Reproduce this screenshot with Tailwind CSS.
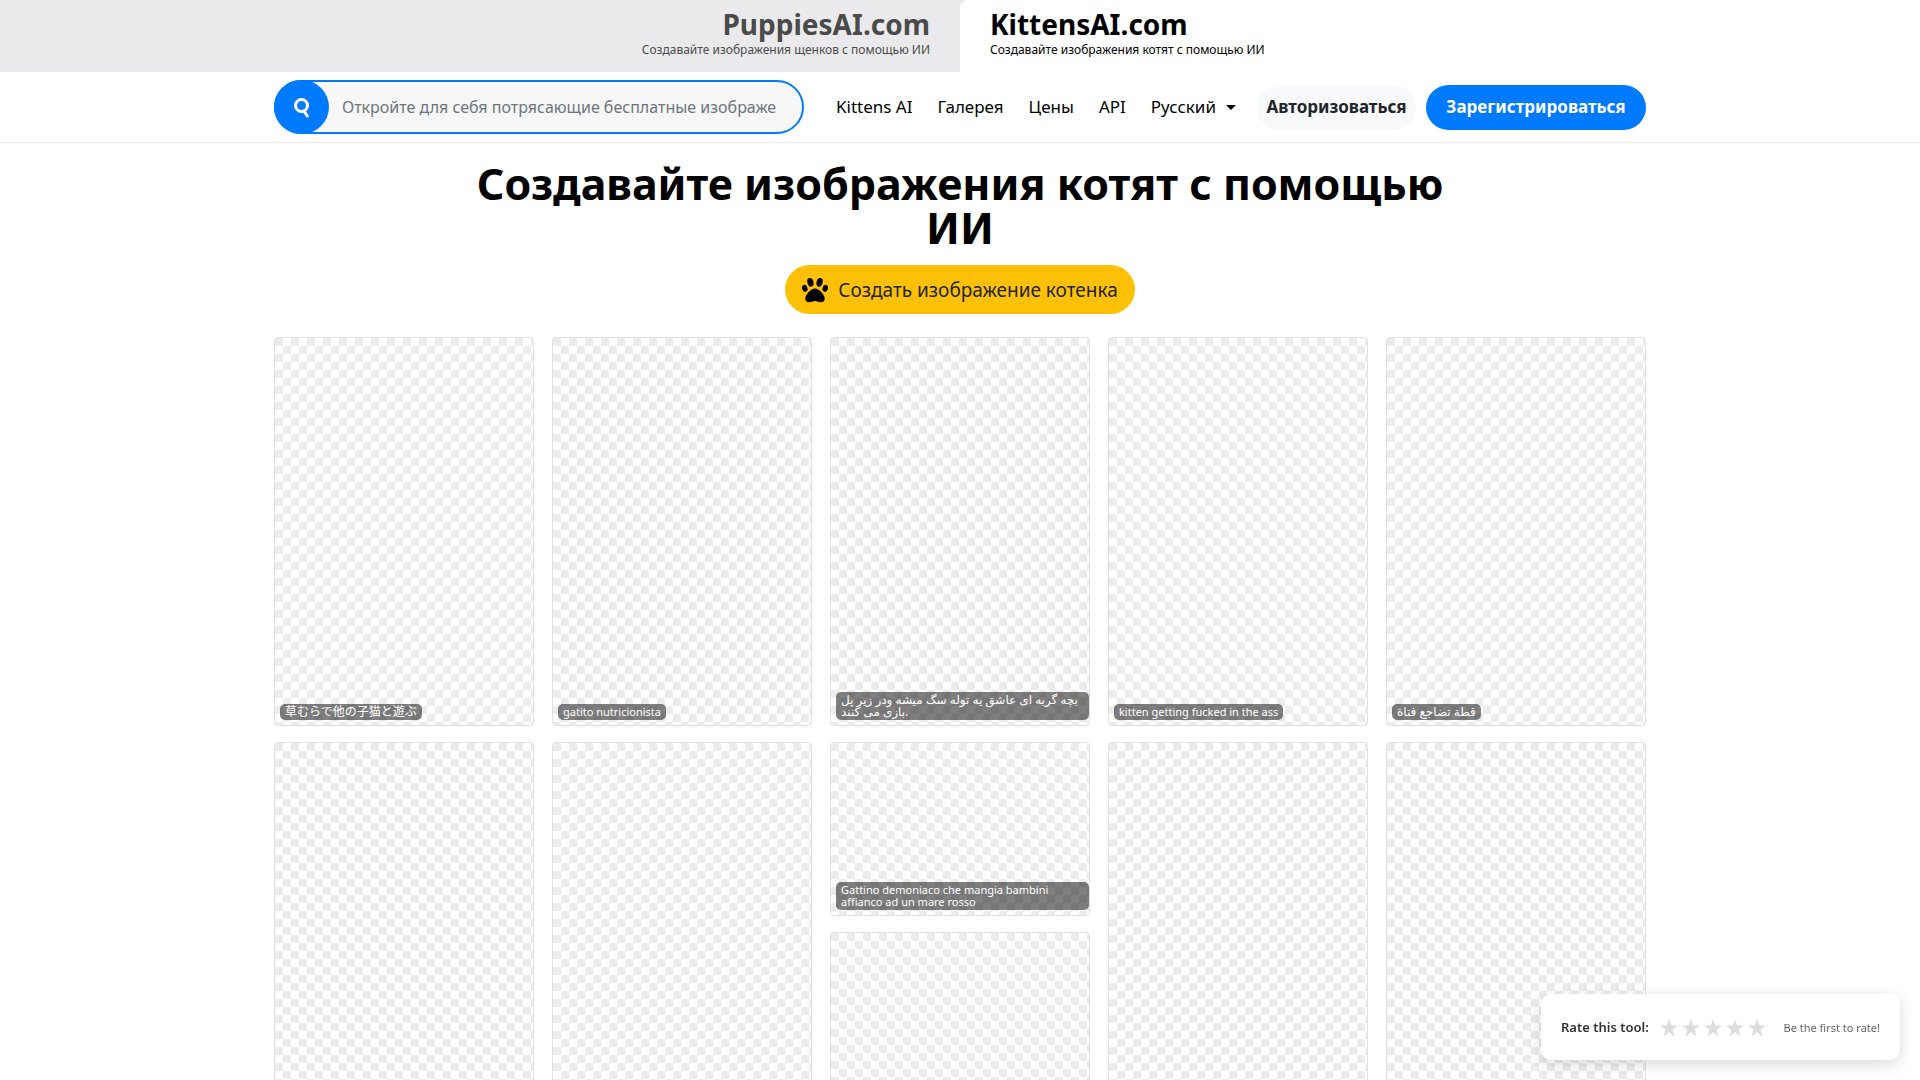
<!DOCTYPE html>
<html lang="ru">
<head>
    <meta charset="UTF-8">
    <meta name="viewport" content="width=device-width, initial-scale=1.0">
    <title>KittensAI.com</title>
    <script src="https://cdn.jsdelivr.net/npm/@tailwindcss/browser@4"></script>
</head>
<body class="bg-white text-black font-['Noto_Sans','Noto_Sans_CJK_JP','DejaVu_Sans',sans-serif]">
    <!-- site tabs -->
    <div class="grid grid-cols-2 h-[72px] bg-[#eaeaec]">
        <a href="#" class="block pt-2 pr-[30px] text-right text-[#4a4a4a]">
            <div class="text-[28px] leading-8 font-bold">PuppiesAI.com</div>
            <div class="text-[12px] leading-5">Создавайте изображения щенков с помощью ИИ</div>
        </a>
        <a href="#" class="block pt-2 pl-[30px] bg-white rounded-tl-lg">
            <div class="text-[28px] leading-8 font-bold">KittensAI.com</div>
            <div class="text-[12px] leading-5">Создавайте изображения котят с помощью ИИ</div>
        </a>
    </div>

    <header class="border-b border-[#ececec]">
        <div class="max-w-[1372px] mx-auto h-[70px] flex items-center">
            <form class="flex w-[530px] h-[54px] shrink-0 rounded-full border-2 border-[#007bff] bg-[#f7f7f7]">
                <button type="button" aria-label="Поиск" class="-m-[2px] w-[55px] h-[54px] shrink-0 rounded-full bg-[#007bff] flex items-center justify-center">
                    <svg class="w-5 h-6" viewBox="0 0 20 24" fill="none" stroke="#fff" stroke-width="3"><circle cx="9.5" cy="10.5" r="6"/><path d="M12 16l4 6"/></svg>
                </button>
                <input type="text" aria-label="Поиск изображений" placeholder="Откройте для себя потрясающие бесплатные изображения" class="grow min-w-0 ml-[15px] mr-[26px] text-[16px] placeholder:text-[#6c757d] outline-none">
            </form>
            <nav class="flex items-center ml-8 gap-[25px] text-[17px] whitespace-nowrap">
                <a href="#">Kittens AI</a>
                <a href="#">Галерея</a>
                <a href="#">Цены</a>
                <a href="#">API</a>
                <button type="button" class="flex items-center gap-[10px]">Русский
                    <svg class="w-[10px] h-[5px]" viewBox="0 0 10 5"><path d="M0 0h10L5 5z"/></svg>
                </button>
            </nav>
            <div class="flex gap-[10px] ml-auto text-[17px] font-bold whitespace-nowrap">
                <button type="button" class="w-[159px] h-[45px] rounded-full bg-[#f8f9fa] text-[#212529]">Авторизоваться</button>
                <button type="button" class="w-[220px] h-[45px] rounded-full bg-[#007bff] text-white">Зарегистрироваться</button>
            </div>
        </div>
    </header>

    <main class="max-w-[1372px] mx-auto pt-[19px]">
        <h1 class="max-w-[1000px] mx-auto text-center text-[43px] leading-[44px] font-bold">Создавайте изображения котят с помощью ИИ</h1>
        <div class="flex justify-center mt-[15px]">
            <button type="button" class="w-[350px] h-[49px] pt-px rounded-full bg-[#ffc107] text-[#212529] text-[19px] flex items-center justify-center gap-[10px] whitespace-nowrap">
                <svg class="w-[26px] h-[26px]" viewBox="0 0 512 512"><path d="M256 224c-79 0-192 123-192 200 0 45 27 72 71 72 49 0 81-25 121-25 41 0 73 25 121 25 44 0 71-27 71-72 0-77-113-200-192-200z"/><ellipse cx="55" cy="224" rx="53" ry="70" transform="rotate(-16 55 224)"/><ellipse cx="457" cy="224" rx="53" ry="70" transform="rotate(16 457 224)"/><ellipse cx="166" cy="105" rx="60" ry="86" transform="rotate(-14 166 105)"/><ellipse cx="346" cy="105" rx="60" ry="86" transform="rotate(14 346 105)"/></svg>
                Создать изображение котенка
            </button>
        </div>

        <div id="gallery" class="grid grid-cols-5 gap-[18px] mt-[23px] leading-3 text-white"></div>
    </main>

    <!-- rating widget -->
    <div class="fixed right-5 bottom-5 w-[359px] h-[66px] px-5 pt-0.5 bg-white rounded-[10px] shadow-[0_4px_16px_rgba(0,0,0,0.15)] flex items-center gap-[11px] whitespace-nowrap">
        <span class="text-[13px] font-semibold text-[#333]">Rate this tool:</span>
        <div id="stars" class="flex gap-1"></div>
        <span class="ml-auto text-[11px] text-[#666]">Be the first to rate!</span>
    </div>

    <script>
        // each column: [card height, caption, caption size]
        const columns = [
            [['h-[389px]', '草むらで他の子猫と遊ぶ', 'text-[12px]'], ['h-[389px]']],
            [['h-[389px]', 'gatito nutricionista', 'text-[11px]'], ['h-[389px]']],
            [['h-[389px]', 'بچه گربه ای عاشق یه توله سگ میشه ودر زیر پل بازی می کنند.', 'text-[12px]'], ['h-[174px]', 'Gattino demoniaco che mangia bambini affianco ad un mare rosso', 'text-[11px]'], ['h-[389px]']],
            [['h-[389px]', 'kitten getting fucked in the ass', 'text-[11px]'], ['h-[389px]']],
            [['h-[389px]', 'قطة تضاجع فتاة', 'text-[12px]'], ['h-[389px]']]
        ];

        document.getElementById('gallery').innerHTML = columns.map(cards => `
            <div class="flex flex-col gap-4">${cards.map(([height, caption, size]) => `
                <a href="#" class="${height} flex items-end pl-[5px] pb-[5px] border border-[#dee2e6] rounded bg-[repeating-conic-gradient(#fff_0_25%,#ececec_0_50%)] bg-[length:16px_16px]">
                    ${caption ? `<span class="${size} px-[5px] py-[2px] rounded-[5px] bg-black/50">${caption}</span>` : ''}
                </a>`).join('')}
            </div>`).join('');

        document.getElementById('stars').innerHTML = [1, 2, 3, 4, 5].map(n => `
            <button type="button" aria-label="${n}">
                <svg class="w-[18px] h-[18px]" viewBox="0 0 18 18" fill="#ddd"><path d="M9 0l2.2 6.6H18l-5.5 4.1L14.6 17.4 9 13.3 3.4 17.4l2.1-6.7L0 6.6h6.8z"/></svg>
            </button>`).join('');
    </script>
</body>
</html>
